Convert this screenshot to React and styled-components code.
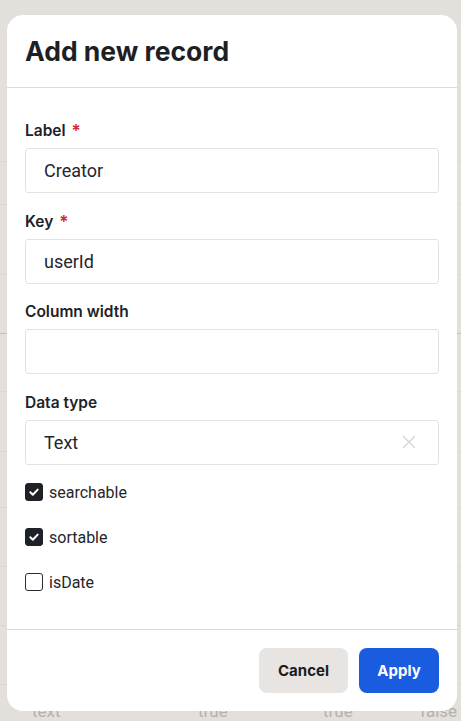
import React from 'react'
import styled, { createGlobalStyle } from 'styled-components'

const GlobalStyle = createGlobalStyle`
    html, body {
        margin: 0;
        padding: 0;
        background: #e3e0dc;
    }
    * {
        box-sizing: border-box;
    }
`

const rows = [
    { h: 162 },
    { h: 43 },
    { h: 70 },
    { h: 59, dark: true },
    { h: 58 },
    { h: 60 },
    { h: 56 },
    { h: 59 },
    { h: 59 },
    { h: 59 },
]

const fields = [
    { label: 'Label', required: true, value: 'Creator' },
    { label: 'Key', required: true, value: 'userId' },
    { label: 'Column width', required: false, value: '' },
    { label: 'Data type', required: false, value: 'Text', clearable: true },
]

const flags = [
    { name: 'searchable', checked: true },
    { name: 'sortable', checked: true },
    { name: 'isDate', checked: false },
]

function CheckIcon() {
    return (
        <svg width="12" height="12" viewBox="0 0 12 12" fill="none">
            <path d="M2.3 6.3 L4.8 8.7 L9.7 3.6" stroke="#fff" strokeWidth="2" strokeLinecap="round" strokeLinejoin="round" />
        </svg>
    )
}

function ClearIcon() {
    return (
        <svg width="14" height="14" viewBox="0 0 14 14" fill="none">
            <path d="M1.5 1.5 L12.5 12.5 M12.5 1.5 L1.5 12.5" stroke="#d6d2ce" strokeWidth="1.3" strokeLinecap="round" />
        </svg>
    )
}

function App() {
    return (
        <Page>
            <GlobalStyle />
            <Table>
                {rows.map((r, i) => (
                    <Row key={i} $h={r.h} $dark={r.dark} />
                ))}
                <LastRow>
                    <Cell $w={166}>text</Cell>
                    <Cell $w={125}>true</Cell>
                    <Cell $w={97}>true</Cell>
                    <Cell>false</Cell>
                </LastRow>
            </Table>

            <Modal>
                <Header>
                    <Title>Add new record</Title>
                </Header>
                <Body>
                    {fields.map((f) => (
                        <Field key={f.label}>
                            <Label>
                                {f.label}
                                {f.required && <Star>*</Star>}
                            </Label>
                            <InputBox>
                                <span>{f.value}</span>
                                {f.clearable && <ClearIcon />}
                            </InputBox>
                        </Field>
                    ))}
                    <Checks>
                        {flags.map((c) => (
                            <CheckRow key={c.name}>
                                <Box $checked={c.checked}>{c.checked && <CheckIcon />}</Box>
                                <span>{c.name}</span>
                            </CheckRow>
                        ))}
                    </Checks>
                </Body>
                <Footer>
                    <CancelButton>Cancel</CancelButton>
                    <ApplyButton>Apply</ApplyButton>
                </Footer>
            </Modal>
        </Page>
    )
}

export default App

const Page = styled.div`
    position: relative;
    width: 461px;
    height: 721px;
    overflow: hidden;
    background: #e3e0dc;
`

const Table = styled.div`
    display: flex;
    flex-direction: column;
`

const Row = styled.div`
    height: ${(p) => p.$h}px;
    flex-shrink: 0;
    border-bottom: 1px solid ${(p) => (p.$dark ? '#c4bfba' : '#dad6d2')};
`

const LastRow = styled.div`
    display: flex;
    padding: 16px 0 0 32px;
    font-family: Roboto, "Liberation Sans", sans-serif;
    font-size: 17px;
    color: #b6b1ab;
    line-height: 20px;
`

const Cell = styled.div`
    width: ${(p) => (p.$w ? `${p.$w}px` : 'auto')};
`

const Modal = styled.div`
    position: absolute;
    top: 15px;
    left: 7px;
    width: 450px;
    height: 696px;
    background: #fff;
    border-radius: 16px;
    display: flex;
    flex-direction: column;
    overflow: hidden;
`

const Header = styled.div`
    height: 73px;
    padding: 0 18px;
    display: flex;
    align-items: center;
    border-bottom: 1px solid #dedad6;
`

const Title = styled.h2`
    margin: 0;
    font-family: Inter, "Liberation Sans", sans-serif;
    font-weight: 700;
    font-size: 26.5px;
    color: #1e1f24;
`

const Body = styled.div`
    flex: 1;
    padding: 33px 18px 0;
    display: flex;
    flex-direction: column;
`

const Field = styled.div`
    display: flex;
    flex-direction: column;
    gap: 7px;
    margin-bottom: 18.6px;
`

const Label = styled.label`
    display: flex;
    align-items: center;
    height: 20px;
    font-family: Inter, "Liberation Sans", sans-serif;
    font-weight: 600;
    font-size: 15.5px;
    line-height: 20px;
    color: #212227;
`

const Star = styled.span`
    color: #d8262a;
    margin-left: 6px;
    font-size: 17px;
    line-height: 20px;
`

const InputBox = styled.div`
    height: 45px;
    border: 1px solid #e4e1de;
    border-radius: 3px;
    padding: 0 22px 0 18px;
    display: flex;
    align-items: center;
    justify-content: space-between;
    font-family: Roboto, "Liberation Sans", sans-serif;
    font-size: 18px;
    color: #25262b;
`

const Checks = styled.div`
    display: flex;
    flex-direction: column;
    gap: 27px;
`

const CheckRow = styled.div`
    display: flex;
    align-items: center;
    gap: 6px;
    height: 18px;
    font-family: Roboto, "Liberation Sans", sans-serif;
    font-size: 16px;
    color: #25262b;
`

const Box = styled.div`
    width: 18px;
    height: 18px;
    border-radius: 3px;
    display: flex;
    align-items: center;
    justify-content: center;
    background: ${(p) => (p.$checked ? '#1f2128' : '#fff')};
    border: 1px solid ${(p) => (p.$checked ? '#1f2128' : '#2a2c33')};
`

const Footer = styled.div`
    border-top: 1px solid #dedad6;
    padding: 18px 18px 0;
    height: 82px;
    display: flex;
    justify-content: flex-end;
    gap: 11px;
`

const CancelButton = styled.button`
    height: 45px;
    width: 89px;
    border: none;
    border-radius: 8px;
    background: #e8e4e1;
    color: #1b1c20;
    font-family: Inter, "Liberation Sans", sans-serif;
    font-weight: 700;
    font-size: 15px;
    cursor: pointer;
`

const ApplyButton = styled(CancelButton)`
    width: 80px;
    background: #1a5ce0;
    color: #fff;
`
